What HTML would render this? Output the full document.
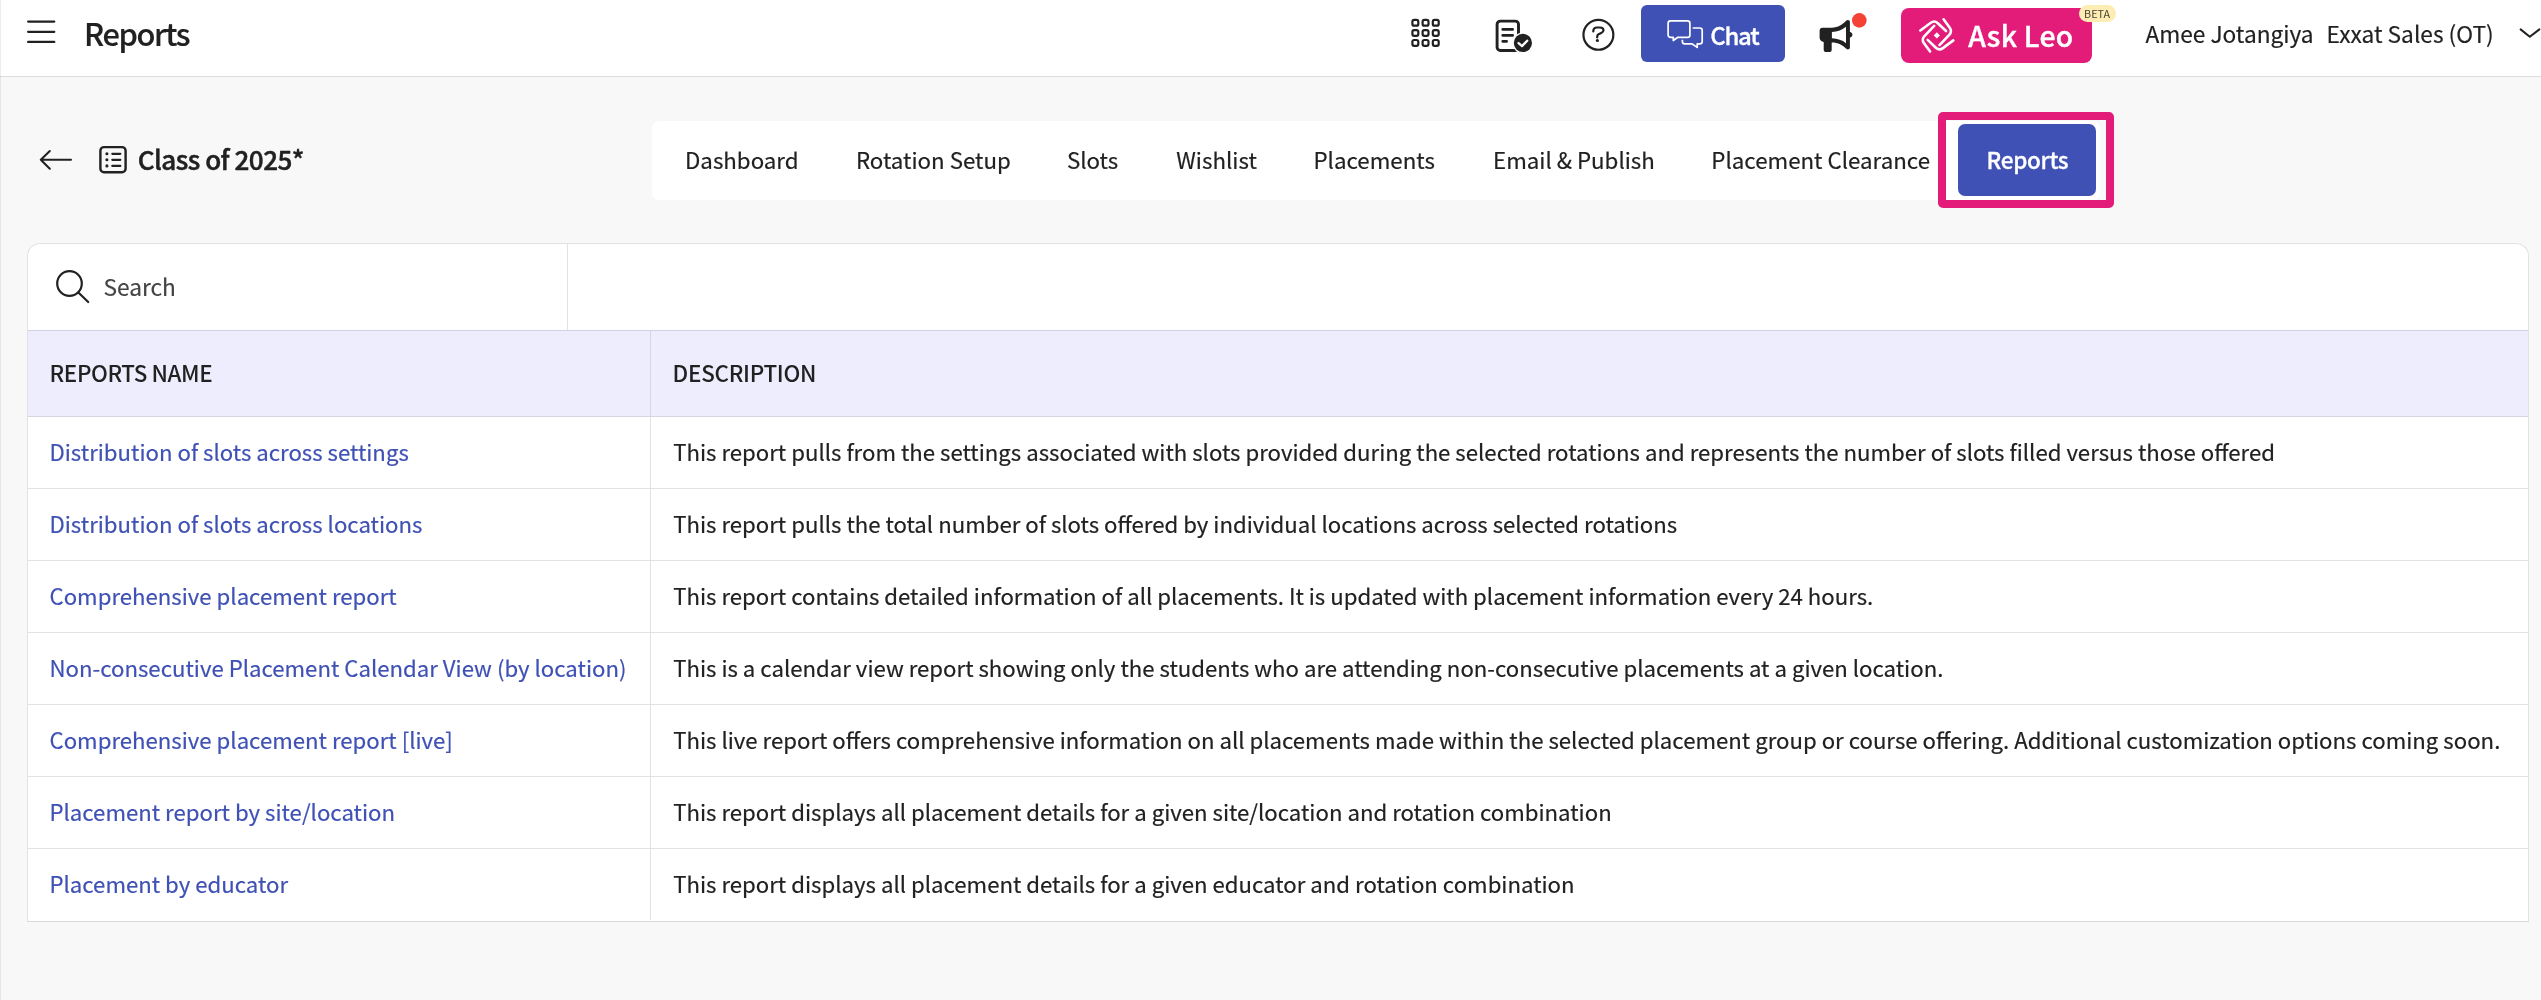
<!DOCTYPE html>
<html lang="en">
<head>
<meta charset="utf-8">
<title>Reports</title>
<style>
html,body{margin:0;padding:0;}
body{width:2541px;height:1000px;overflow:hidden;background:#f8f8f8;position:relative;font-family:"Noto Sans CJK SC", "Liberation Sans", sans-serif;color:#212121;}
.t{position:absolute;white-space:nowrap;-webkit-text-stroke:0.18px;}
.abs{position:absolute;}
svg{position:absolute;overflow:visible;}
a{color:inherit;text-decoration:none;}
#app{position:absolute;left:0;top:0;width:2541px;height:1000px;will-change:transform;}
</style>
</head>
<body>
<div id="app">

<div class="abs" style="left:0;top:0;width:2541px;height:76px;background:#fff;border-bottom:1px solid #dedede;"></div>
<div class="abs" style="left:0;top:0;width:1px;height:1000px;background:rgba(0,0,0,0.075);"></div>
<svg style="left:0;top:0" width="80" height="76" viewBox="0 0 80 76"><g stroke="#212121" stroke-width="2.2" stroke-linecap="round" fill="none">
<path d="M28.1 21.6H54.3M28.1 31.8H54.3M28.1 41.9H54.3"/></g></svg>
<div class="t " style="left:83.90px;top:10px;font-size:30.8px;line-height:45px;font-weight:500;color:#212121;letter-spacing:-1.36px;">Reports</div>
<svg style="left:0;top:0" width="2541" height="76" viewBox="0 0 2541 76"><g fill="none" stroke="#212121" stroke-width="2.2"><rect x="1412.4" y="19.9" width="5.9" height="5.8" rx="1.8"/><rect x="1422.6" y="19.9" width="5.9" height="5.8" rx="1.8"/><rect x="1432.8" y="19.9" width="5.9" height="5.8" rx="1.8"/><rect x="1412.4" y="30.05" width="5.9" height="5.8" rx="1.8"/><rect x="1422.6" y="30.05" width="5.9" height="5.8" rx="1.8"/><rect x="1432.8" y="30.05" width="5.9" height="5.8" rx="1.8"/><rect x="1412.4" y="40.0" width="5.9" height="5.8" rx="1.8"/><rect x="1422.6" y="40.0" width="5.9" height="5.8" rx="1.8"/><rect x="1432.8" y="40.0" width="5.9" height="5.8" rx="1.8"/></g></svg>
<svg style="left:0;top:0" width="2541" height="76" viewBox="0 0 2541 76">
<rect x="1497.1" y="21.1" width="21.4" height="29.4" rx="3.2" fill="none" stroke="#212121" stroke-width="2.9"/>
<g stroke="#212121" stroke-width="2.8" stroke-linecap="round"><path d="M1502.8 29.4H1512.6M1502.8 35.4H1512.6M1502.8 41.4H1506.6"/></g>
<circle cx="1522.9" cy="42.95" r="10.5" fill="#fff"/>
<circle cx="1522.9" cy="42.95" r="9.1" fill="#212121"/>
<path d="M1518.6 43.1L1522 46.1L1527.2 40.7" fill="none" stroke="#fff" stroke-width="2.3" stroke-linecap="round" stroke-linejoin="round"/>
</svg>
<svg style="left:0;top:0" width="2541" height="76" viewBox="0 0 2541 76">
<circle cx="1598.4" cy="34.8" r="14.95" fill="none" stroke="#212121" stroke-width="2.2"/>
<path d="M1593.25 31.5C1593.3 29 1594.6 27.5 1597 27.5H1600C1602.2 27.5 1603.5 28.6 1603.5 30.2C1603.5 31.6 1602.6 32.3 1601.2 33L1598.6 34.3C1597.5 34.9 1597.2 35.6 1597.2 36.6V37.5" fill="none" stroke="#212121" stroke-width="2.2" stroke-linecap="round" stroke-linejoin="round"/>
<circle cx="1597.4" cy="40.5" r="1.6" fill="#212121"/>
</svg>
<div class="abs" style="left:1641px;top:5px;width:144px;height:57px;background:#3f51b5;border-radius:6px;"></div>
<svg style="left:0;top:0" width="2541" height="76" viewBox="0 0 2541 76"><g fill="none" stroke="#fff" stroke-width="1.7" stroke-linejoin="round">
<path d="M1670.5 20.9h17a2.4 2.4 0 0 1 2.4 2.4v11.6a2.4 2.4 0 0 1-2.4 2.4h-9.6l-4.6 3.2v-3.2h-2.8a2.4 2.4 0 0 1-2.4-2.4v-11.6a2.4 2.4 0 0 1 2.4-2.4z"/>
<path d="M1692.6 28h7.2a2.4 2.4 0 0 1 2.4 2.4v11a2.4 2.4 0 0 1-2.4 2.4h-2.6v3.6l-5.4-3.6h-7a2.4 2.4 0 0 1-2.4-2.4v-1.6"/>
</g></svg>
<div class="t " style="left:1710.20px;top:17px;font-size:24.0px;line-height:35px;font-weight:500;color:#fff;letter-spacing:-1.28px;-webkit-text-stroke:0.3px #fff;">Chat</div>
<svg style="left:0;top:0" width="2541" height="76" viewBox="0 0 2541 76">
<path fill="#212121" d="M1822.6 27.8h9.1c6.5 0 11-3.3 14.6-7.2c1.3-1.4 3.6-0.6 3.6 1.2v10.1c1.6 0.3 2.5 1.4 2.5 2.8s-0.9 2.5-2.5 2.8v10.1c0 1.8-2.3 2.6-3.6 1.2c-3.6-3.9-8.1-6.4-14.6-6.4v7.6a2 2 0 0 1-2 2h-4a2 2 0 0 1-2-2v-7.9c-2.3-0.5-4.1-1.9-4.1-4.3v-7a3 3 0 0 1 3-3z"/>
<path fill="#fff" d="M1831.9 31.9c5.7-0.3 10.4-2 14.1-5.2v16.5c-3.7-3.1-8.4-4.6-14.1-4.9z"/>
<circle cx="1859.3" cy="20.4" r="7.3" fill="#f44336"/>
</svg>
<div class="abs" style="left:1901px;top:8.3px;width:190.5px;height:54.5px;background:#e31c79;border-radius:8px;"></div>
<svg style="left:0;top:0" width="2541" height="76" viewBox="0 0 2541 76"><g transform="translate(1936.85 35.45)" fill="none" stroke="#fff" stroke-width="2.6" stroke-linecap="round" stroke-linejoin="round"><path transform="rotate(0)" d="M-16.50 -4.95L-6.05 -12.67Q-2.35 -15.40 0.99 -12.24L9.20 -4.45"/><path transform="rotate(0)" d="M6.75 -16.10L12.89 -7.67Q15.60 -3.95 12.42 -0.62L2.65 9.60"/><path transform="rotate(180)" d="M-16.50 -4.95L-6.05 -12.67Q-2.35 -15.40 0.99 -12.24L9.20 -4.45"/><path transform="rotate(180)" d="M6.75 -16.10L12.89 -7.67Q15.60 -3.95 12.42 -0.62L2.65 9.60"/><path d="M0 -3.1L3.1 0L0 3.1L-3.1 0Z" fill="#fff" stroke="none"/></g></svg>
<div class="t " style="left:1968.30px;top:14px;font-size:28.3px;line-height:41px;font-weight:500;color:#fff;letter-spacing:0.25px;-webkit-text-stroke:0.4px #fff;">Ask Leo</div>
<div class="abs" style="left:2078.9px;top:5px;width:37.1px;height:17.4px;background:#fdedb4;border-radius:9px;"></div>
<div class="t " style="left:2084.10px;top:5px;font-size:10.8px;line-height:16px;font-weight:400;color:#4a4433;-webkit-text-stroke:0;">BETA</div>
<div class="t " style="left:2145.40px;top:17px;font-size:22.7px;line-height:33px;font-weight:400;color:#212121;">Amee Jotangiya</div>
<div class="t " style="left:2326.60px;top:17px;font-size:22.7px;line-height:33px;font-weight:400;color:#212121;">Exxat Sales (OT)</div>
<svg style="left:0;top:0" width="2541" height="76" viewBox="0 0 2541 76"><path d="M2520.6 29.4l9.2 7.4l9.6-7.4" fill="none" stroke="#212121" stroke-width="2" stroke-linecap="round" stroke-linejoin="round"/></svg>
<svg style="left:0;top:100px" width="400" height="120" viewBox="0 100 400 120">
<g fill="none" stroke="#212121" stroke-width="2.1" stroke-linecap="round" stroke-linejoin="round"><path d="M71 159.8H40.8M49.8 151L40.8 159.8L49.8 168.7"/></g>
<rect x="100.4" y="147.1" width="25.2" height="25.2" rx="3.6" fill="none" stroke="#212121" stroke-width="2.4"/>
<g stroke="#212121" stroke-width="2.2" stroke-linecap="round"><path d="M112.3 153.8H120.3M112.3 159.8H120.3M112.3 165.9H120.3"/></g>
<g fill="#212121"><circle cx="106.9" cy="153.8" r="1.55"/><circle cx="106.9" cy="159.8" r="1.55"/><circle cx="106.9" cy="165.9" r="1.55"/></g>
</svg>
<div class="t " style="left:137.70px;top:140px;font-size:26.1px;line-height:38px;font-weight:500;color:#212121;letter-spacing:-0.52px;-webkit-text-stroke:0.45px #212121;">Class of 2025*</div>
<div class="abs" style="left:652px;top:120.7px;width:1448px;height:79.3px;background:#fff;border-radius:7px;"></div>
<div class="t " style="left:685.00px;top:143px;font-size:22.3px;line-height:32px;font-weight:400;color:#212121;">Dashboard</div>
<div class="t " style="left:855.90px;top:143px;font-size:22.3px;line-height:32px;font-weight:400;color:#212121;">Rotation Setup</div>
<div class="t " style="left:1066.90px;top:143px;font-size:22.3px;line-height:32px;font-weight:400;color:#212121;">Slots</div>
<div class="t " style="left:1176.30px;top:143px;font-size:22.3px;line-height:32px;font-weight:400;color:#212121;">Wishlist</div>
<div class="t " style="left:1313.50px;top:143px;font-size:22.3px;line-height:32px;font-weight:400;color:#212121;">Placements</div>
<div class="t " style="left:1493.00px;top:143px;font-size:22.3px;line-height:32px;font-weight:400;color:#212121;">Email &amp; Publish</div>
<div class="t " style="left:1711.30px;top:143px;font-size:22.3px;line-height:32px;font-weight:400;color:#212121;">Placement Clearance</div>
<div class="abs" style="left:1958px;top:124px;width:138px;height:72px;background:#3f51b5;border-radius:7px;"></div>
<div class="t " style="left:1986.50px;top:143px;font-size:22.5px;line-height:32px;font-weight:500;color:#fff;letter-spacing:-0.3px;-webkit-text-stroke:0.3px;">Reports</div>
<div class="abs" style="left:1938px;top:112px;width:160px;height:80px;border:8px solid #e31c79;border-radius:5px;"></div>
<div class="abs" style="left:27px;top:243px;width:2500px;height:677px;background:#fff;border:1px solid #e2e2e2;border-bottom-color:#d9d9d9;border-radius:13px 13px 0 0;"></div>
<div class="abs" style="left:567px;top:244px;width:1px;height:86px;background:#e2e2e2;"></div>
<svg style="left:40px;top:260px" width="60" height="60" viewBox="40 260 60 60"><g fill="none" stroke="#212121" stroke-width="2.2" stroke-linecap="round"><circle cx="69.5" cy="283.5" r="12.3"/><path d="M78.4 292.5L88.2 302"/></g></svg>
<div class="t " style="left:103.50px;top:270px;font-size:22.7px;line-height:33px;font-weight:400;color:#444;">Search</div>
<div class="abs" style="left:28px;top:330px;width:2500px;height:85px;background:#eeedfe;border-top:1px solid #d1d1e3;border-bottom:1px solid #d4d4e5;"></div>
<div class="abs" style="left:650px;top:331px;width:1px;height:85px;background:#d6d6e6;"></div>
<div class="t " style="left:49.60px;top:356px;font-size:22.4px;line-height:32px;font-weight:500;color:#212121;letter-spacing:-0.42px;-webkit-text-stroke:0;">REPORTS NAME</div>
<div class="t " style="left:672.60px;top:356px;font-size:22.4px;line-height:32px;font-weight:500;color:#212121;letter-spacing:-0.27px;-webkit-text-stroke:0;">DESCRIPTION</div>
<div class="abs" style="left:650px;top:417px;width:1px;height:503px;background:#e2e2e2;"></div>
<div class="t " style="left:49.50px;top:435px;font-size:22.2px;line-height:32px;font-weight:400;color:#3f51b5;"><a>Distribution of slots across settings</a></div>
<div class="t " style="left:673.20px;top:435px;font-size:22.2px;line-height:32px;font-weight:400;color:#212121;">This report pulls from the settings associated with slots provided during the selected rotations and represents the number of slots filled versus those offered</div>
<div class="abs" style="left:28px;top:488px;width:2500px;height:1px;background:#e2e2e2;"></div>
<div class="t " style="left:49.50px;top:507px;font-size:22.2px;line-height:32px;font-weight:400;color:#3f51b5;"><a>Distribution of slots across locations</a></div>
<div class="t " style="left:673.20px;top:507px;font-size:22.2px;line-height:32px;font-weight:400;color:#212121;">This report pulls the total number of slots offered by individual locations across selected rotations</div>
<div class="abs" style="left:28px;top:560px;width:2500px;height:1px;background:#e2e2e2;"></div>
<div class="t " style="left:49.50px;top:579px;font-size:22.2px;line-height:32px;font-weight:400;color:#3f51b5;"><a>Comprehensive placement report</a></div>
<div class="t " style="left:673.20px;top:579px;font-size:22.2px;line-height:32px;font-weight:400;color:#212121;">This report contains detailed information of all placements. It is updated with placement information every 24 hours.</div>
<div class="abs" style="left:28px;top:632px;width:2500px;height:1px;background:#e2e2e2;"></div>
<div class="t " style="left:49.50px;top:651px;font-size:22.2px;line-height:32px;font-weight:400;color:#3f51b5;"><a>Non-consecutive Placement Calendar View (by location)</a></div>
<div class="t " style="left:673.20px;top:651px;font-size:22.2px;line-height:32px;font-weight:400;color:#212121;">This is a calendar view report showing only the students who are attending non-consecutive placements at a given location.</div>
<div class="abs" style="left:28px;top:704px;width:2500px;height:1px;background:#e2e2e2;"></div>
<div class="t " style="left:49.50px;top:723px;font-size:22.2px;line-height:32px;font-weight:400;color:#3f51b5;"><a>Comprehensive placement report [live]</a></div>
<div class="t " style="left:673.20px;top:723px;font-size:22.2px;line-height:32px;font-weight:400;color:#212121;">This live report offers comprehensive information on all placements made within the selected placement group or course offering. Additional customization options coming soon.</div>
<div class="abs" style="left:28px;top:776px;width:2500px;height:1px;background:#e2e2e2;"></div>
<div class="t " style="left:49.50px;top:795px;font-size:22.2px;line-height:32px;font-weight:400;color:#3f51b5;"><a>Placement report by site/location</a></div>
<div class="t " style="left:673.20px;top:795px;font-size:22.2px;line-height:32px;font-weight:400;color:#212121;">This report displays all placement details for a given site/location and rotation combination</div>
<div class="abs" style="left:28px;top:848px;width:2500px;height:1px;background:#e2e2e2;"></div>
<div class="t " style="left:49.50px;top:867px;font-size:22.2px;line-height:32px;font-weight:400;color:#3f51b5;"><a>Placement by educator</a></div>
<div class="t " style="left:673.20px;top:867px;font-size:22.2px;line-height:32px;font-weight:400;color:#212121;">This report displays all placement details for a given educator and rotation combination</div>
</div>
</body></html>
